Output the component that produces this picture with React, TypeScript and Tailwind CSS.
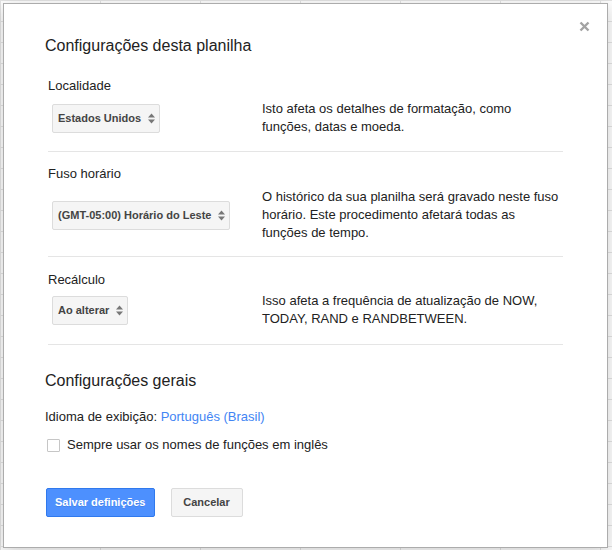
import React from "react";

const sections = [
  {
    label: "Localidade",
    value: "Estados Unidos",
    lines: ["Isto afeta os detalhes de formatação, como", "funções, datas e moeda."],
    pad: "pt-[13px] pb-[15px]",
    gap: "mb-[5px]",
  },
  {
    label: "Fuso horário",
    value: "(GMT-05:00) Horário do Leste",
    lines: [
      "O histórico da sua planilha será gravado neste fuso",
      "horário. Este procedimento afetará todas as",
      "funções de tempo.",
    ],
    pad: "pt-[13px] pb-[14px]",
    gap: "mb-[5px]",
  },
  {
    label: "Recálculo",
    value: "Ao alterar",
    lines: ["Isso afeta a frequência de atualização de NOW,", "TODAY, RAND e RANDBETWEEN."],
    pad: "pt-[14px] pb-[16px]",
    gap: "mb-[3px]",
  },
];

function SelectArrows() {
  return (
    <svg width="7" height="11" viewBox="0 0 7 11" className="shrink-0">
      <path d="M0 4.5 L3.5 0.5 L7 4.5 Z" fill="#777" />
      <path d="M0 6.5 L3.5 10.5 L7 6.5 Z" fill="#777" />
    </svg>
  );
}

function FakeSelect({ value }: { value: string }) {
  return (
    <div className="inline-flex items-center gap-[7px] h-[29px] pl-[5px] pr-[4px] bg-[#f5f5f5] border border-[#dcdcdc] rounded-[2px] text-[11px] font-bold text-[#444]">
      <span>{value}</span>
      <SelectArrows />
    </div>
  );
}

export default function App() {
  return (
    <div
      className="w-[612px] h-[550px] bg-white bg-[linear-gradient(to_right,#e4e4e4_1px,transparent_1px),linear-gradient(to_bottom,#e4e4e4_1px,transparent_1px)] bg-size-[100px_21px] overflow-hidden"
      style={{ fontFamily: '"Liberation Sans", Arial, sans-serif' }}
    >
      <div className="relative ml-[3px] mt-[3px] w-[605px] bg-white border border-[#acacac] shadow-[0_4px_16px_rgba(0,0,0,0.2)] px-[41px] pt-[32px] pb-[30px] text-[#222]">
        {/* close */}
        <button className="absolute right-[17px] top-[16px] w-[12px] h-[12px] flex items-center justify-center">
          <svg width="11" height="11" viewBox="0 0 11 11">
            <path d="M1.5 1.5 L9.5 9.5 M9.5 1.5 L1.5 9.5" stroke="#a3a3a3" strokeWidth="2.4" />
          </svg>
        </button>

        <h2 className="text-[16px] leading-5 mb-2 font-normal">Configurações desta planilha</h2>

        {sections.map((s) => (
          <div key={s.label} className={`mx-[3px] border-b border-[#e5e5e5] ${s.pad}`}>
            <div className={`text-[13px] leading-[18px] ${s.gap}`}>{s.label}</div>
            <div className="flex items-center">
              <div className="w-[214px] pl-[4px] shrink-0">
                <FakeSelect value={s.value} />
              </div>
              <p className="text-[13px] leading-[18px] whitespace-nowrap">
                {s.lines.map((l, j) => (
                  <React.Fragment key={j}>
                    {l}
                    {j < s.lines.length - 1 && <br />}
                  </React.Fragment>
                ))}
              </p>
            </div>
          </div>
        ))}

        <h2 className="mt-[26px] text-[16px] leading-5 font-normal">Configurações gerais</h2>

        <div className="mt-[17px] text-[13px] leading-[18px]">
          Idioma de exibição: <span className="text-[#4285f4]">Português (Brasil)</span>
        </div>

        <label className="mt-[10px] ml-[2px] flex items-center gap-[7px] text-[13px] leading-[18px]">
          <span className="w-[13px] h-[13px] border border-[#c6c6c6] rounded-[1px] bg-white" />
          Sempre usar os nomes de funções em inglês
        </label>

        <div className="mt-[34px] ml-[1px] flex gap-4">
          <button className="h-[29px] min-w-[72px] px-2 bg-[#4d90fe] border border-[#3079ed] rounded-[2px] text-[11px] font-bold text-white [text-shadow:0_1px_rgba(0,0,0,0.1)]">
            Salvar definições
          </button>
          <button className="h-[29px] min-w-[72px] px-2 bg-[#f5f5f5] border border-[#dcdcdc] rounded-[2px] text-[11px] font-bold text-[#444]">
            Cancelar
          </button>
        </div>
      </div>
    </div>
  );
}
